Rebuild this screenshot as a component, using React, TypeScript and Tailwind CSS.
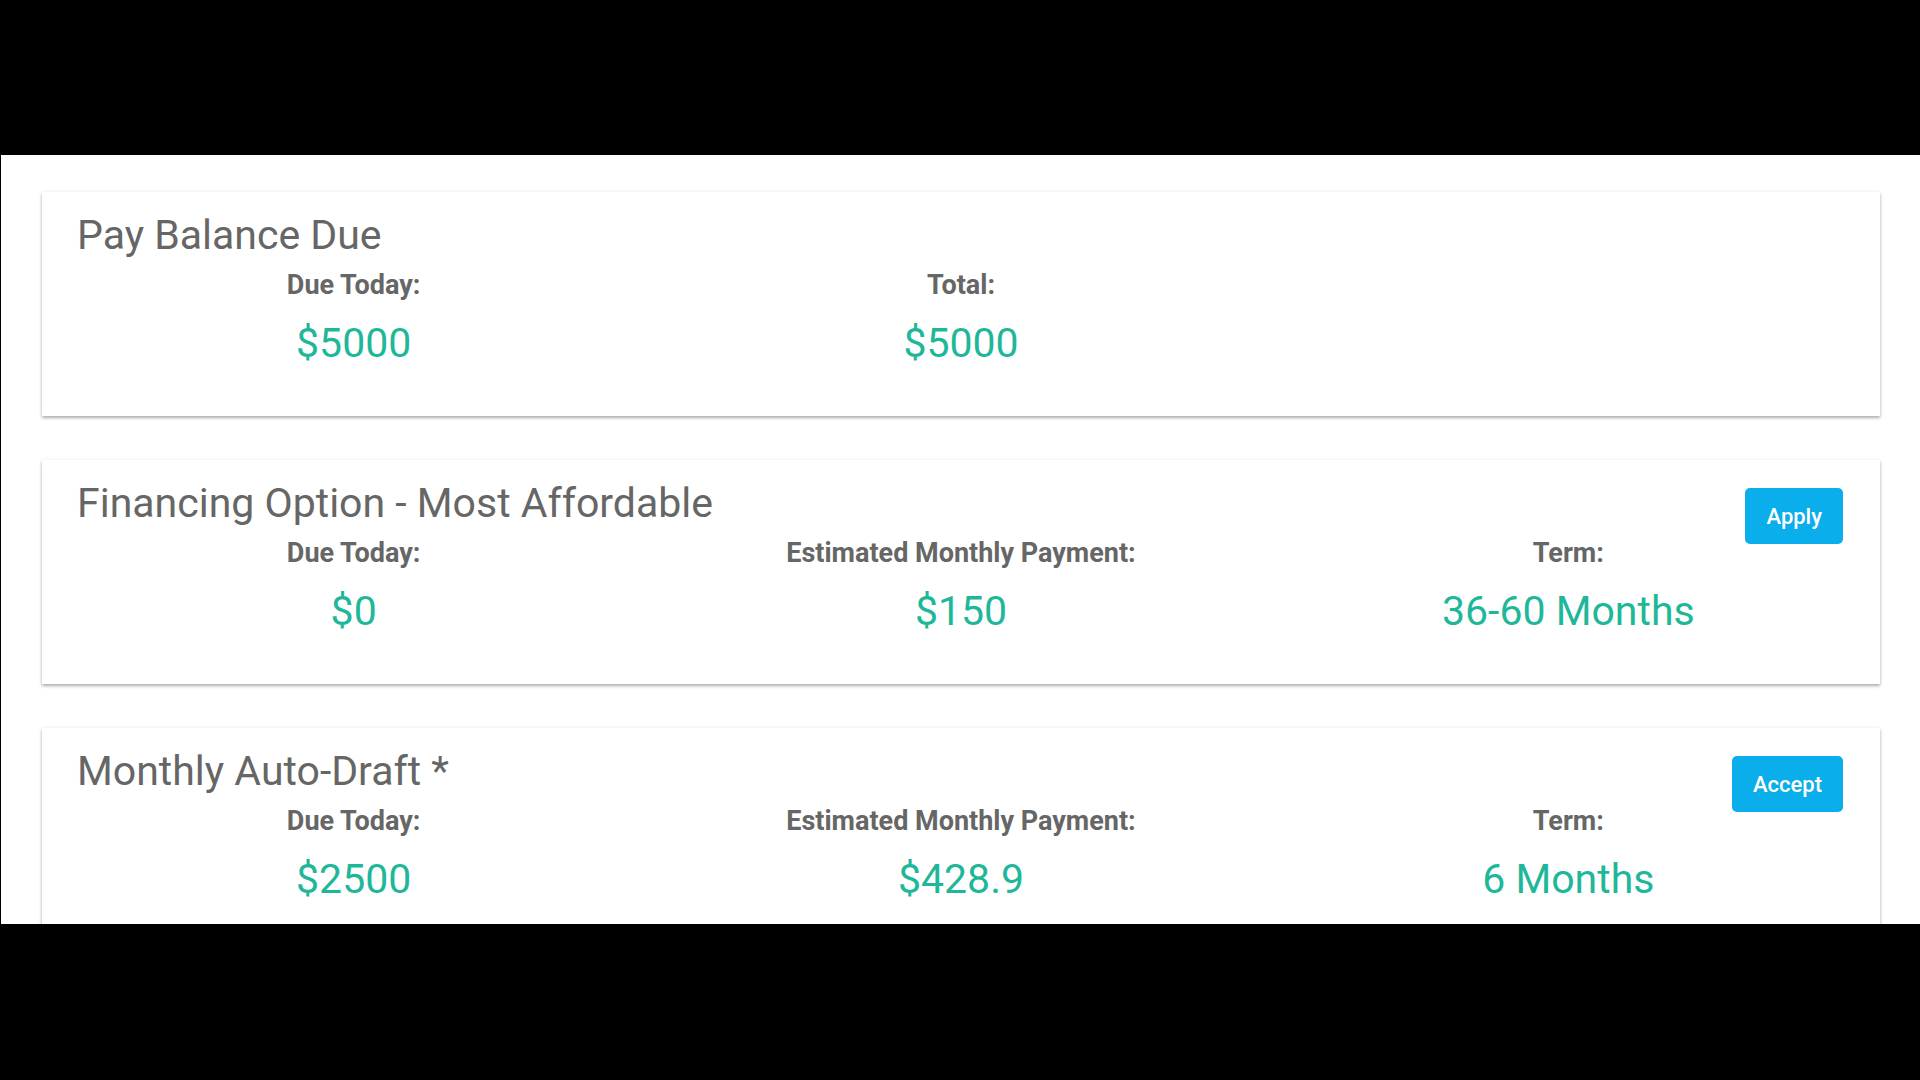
import React from "react";

type Stat = { label: string; value: string };

type Option = {
  title: string;
  stats: Stat[];
  action?: string;
};

const options: Option[] = [
  {
    title: "Pay Balance Due",
    stats: [
      { label: "Due Today:", value: "$5000" },
      { label: "Total:", value: "$5000" },
    ],
  },
  {
    title: "Financing Option - Most Affordable",
    action: "Apply",
    stats: [
      { label: "Due Today:", value: "$0" },
      { label: "Estimated Monthly Payment:", value: "$150" },
      { label: "Term:", value: "36-60 Months" },
    ],
  },
  {
    title: "Monthly Auto-Draft *",
    action: "Accept",
    stats: [
      { label: "Due Today:", value: "$2500" },
      { label: "Estimated Monthly Payment:", value: "$428.9" },
      { label: "Term:", value: "6 Months" },
    ],
  },
];

function OptionCard({ option }: { option: Option }) {
  return (
    <div className="h-[224px] shrink-0 bg-white pt-[21px] shadow-[0_2px_3px_rgba(0,0,0,0.3),0_0_5px_rgba(0,0,0,0.06)]">
      {/* title row, button hangs over the stats row */}
      <div className="flex h-[42px] items-start justify-between pl-[35px] pr-[37px]">
        <h2 className="text-[41px] leading-[44px] font-normal text-[#666]">
          {option.title}
        </h2>
        {option.action && (
          <button className="mt-[7px] h-[56px] rounded-[5px] bg-[#0aaeea] px-[21px] text-[22px] font-medium text-white">
            {option.action}
          </button>
        )}
      </div>
      <div className="grid grid-cols-3 px-[8px]">
        {option.stats.map((s) => (
          <div key={s.label} className="flex flex-col items-center">
            <div className="mt-[15px] text-[27px] leading-[30px] font-bold text-[#666]">
              {s.label}
            </div>
            <div className="mt-[19px] text-[41px] leading-[48px] text-[#1fb799]">
              {s.value}
            </div>
          </div>
        ))}
      </div>
    </div>
  );
}

export default function App() {
  return (
    <div
      className="h-screen overflow-hidden bg-black pt-[155px]"
      style={{ fontFamily: "Roboto, 'Liberation Sans', sans-serif" }}
    >
      <div className="ml-px flex h-[769px] flex-col gap-[44px] overflow-hidden bg-white pt-[37px] pl-[41px] pr-[40px]">
        {options.map((o) => (
          <OptionCard key={o.title} option={o} />
        ))}
      </div>
    </div>
  );
}
